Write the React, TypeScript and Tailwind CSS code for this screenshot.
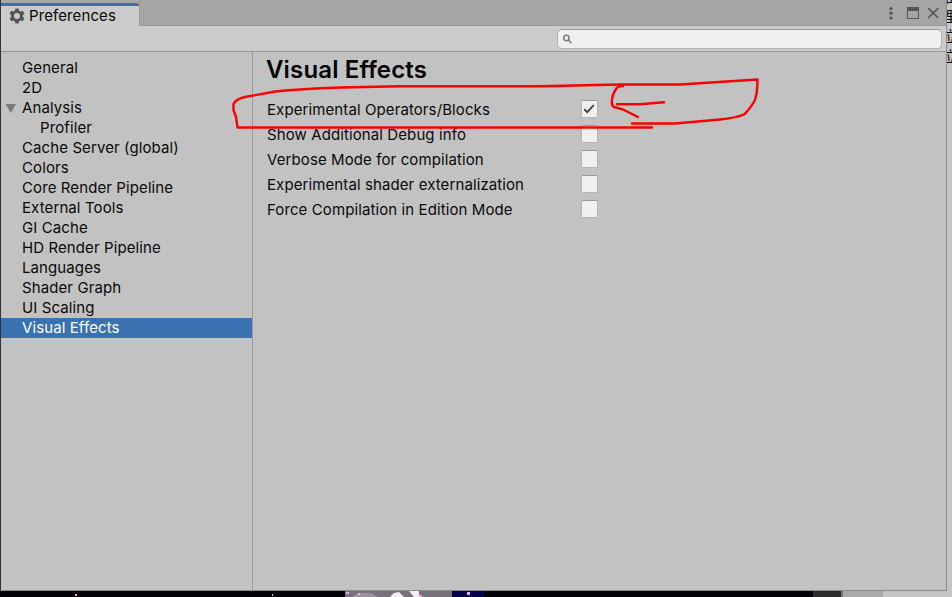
import React from "react";

type Category = { label: string; child?: boolean; open?: boolean; active?: boolean };

const categories: Category[] = [
  { label: "General" },
  { label: "2D" },
  { label: "Analysis", open: true },
  { label: "Profiler", child: true },
  { label: "Cache Server (global)" },
  { label: "Colors" },
  { label: "Core Render Pipeline" },
  { label: "External Tools" },
  { label: "GI Cache" },
  { label: "HD Render Pipeline" },
  { label: "Languages" },
  { label: "Shader Graph" },
  { label: "UI Scaling" },
  { label: "Visual Effects", active: true },
];

const options = [
  { label: "Experimental Operators/Blocks", checked: true },
  { label: "Show Additional Debug info", checked: false },
  { label: "Verbose Mode for compilation", checked: false },
  { label: "Experimental shader externalization", checked: false },
  { label: "Force Compilation in Edition Mode", checked: false },
];

function Gear() {
  return (
    <svg className="h-4 w-4 shrink-0" viewBox="0 0 16 16" fill="none">
      <circle cx="8" cy="8" r="4.4" stroke="#555" strokeWidth="2.8" />
      <g fill="#555">
        {[0, 60, 120, 180, 240, 300].map((a) => (
          <path key={a} d="M6.3 0.4h3.4l.6 3H5.7z" transform={`rotate(${a} 8 8)`} />
        ))}
      </g>
    </svg>
  );
}

function TitleBar() {
  return (
    <div className="flex h-[26px] shrink-0 items-end bg-[#a5a5a5]">
      <div className="flex h-[23px] w-[138px] items-center rounded-tr-[3px] border-t-[3px] border-[#3a72b0] bg-[#cbcbcb] pl-2">
        <Gear />
        <span className="ml-[4px] text-[15px] leading-5 tracking-[0.1px]">Preferences</span>
      </div>
      <div className="flex h-[26px] flex-1 items-center justify-end border-b border-l border-[#999] pr-px">
        <svg className="h-[26px] w-[60px]" viewBox="0 0 60 26" fill="#555">
          <circle cx="6" cy="8.5" r="1.6" />
          <circle cx="6" cy="13.2" r="1.6" />
          <circle cx="6" cy="18" r="1.6" />
          <path d="M22 7h12v12H22zM23 11v7h10v-7z" fillRule="evenodd" />
          <path d="M43.2 8.2l10 9.8M53.2 8.2l-10 9.8" stroke="#555" strokeWidth="1.7" />
        </svg>
      </div>
    </div>
  );
}

function SearchBar() {
  return (
    <div className="flex h-[26px] shrink-0 items-center justify-end border-b border-[#999] bg-[#cbcbcb] pr-[4px]">
      <div className="flex h-5 w-[385px] items-center rounded-[5px] border border-[#b0b0b0] border-t-[#999] bg-[#f0f0f0] pl-[4px]">
        <svg className="h-3 w-3" viewBox="0 0 12 12" fill="none" stroke="#7c7c7c">
          <circle cx="4.4" cy="5" r="2.7" strokeWidth="1.5" />
          <path d="M6.4 7l3 3.2" strokeWidth="1.6" />
        </svg>
      </div>
    </div>
  );
}

function Sidebar() {
  return (
    <nav className="w-[252px] shrink-0 border-r border-[#999] pt-[6px]">
      {categories.map((c) => (
        <div
          key={c.label}
          className={`flex h-5 items-center text-[15px] leading-5 tracking-[0.1px] ${c.child ? "pl-[39px]" : "pl-[4px]"} ${c.active ? "bg-[#3a72b0] text-white" : ""}`}
        >
          {!c.child && (
            <span className="w-[17px] shrink-0">
              {c.open && (
                <svg className="h-[9px] w-[11px]" viewBox="0 0 11 9" fill="#7b7b7b">
                  <path d="M0.5 0h10.5L5.8 9z" />
                </svg>
              )}
            </span>
          )}
          {c.label}
        </div>
      ))}
    </nav>
  );
}

function Checkbox({ checked }: { checked: boolean }) {
  return (
    <span className="mb-px flex h-[18px] w-[17px] items-center justify-center rounded-[2px] border border-[#b4b4b4] border-t-[#999] bg-[#f0f0f0]">
      {checked && (
        <svg className="mr-px h-3 w-3" viewBox="0 0 12 12" fill="none" stroke="#3c3c3c" strokeWidth="1.8">
          <path d="M1.2 6.2l3 3L10.8 2" />
        </svg>
      )}
    </span>
  );
}

function Settings() {
  return (
    <main className="flex-1 pl-[14px]">
      <h1 className="-ml-px h-[45px] pt-[2px] text-[24px] leading-[32px] font-semibold tracking-[0.15px] text-black">Visual Effects</h1>
      {options.map((o) => (
        <label key={o.label} className="flex h-[25px] items-center">
          <span className="w-[314px] text-[15px] leading-5 tracking-[0.1px]">{o.label}</span>
          <Checkbox checked={o.checked} />
        </label>
      ))}
    </main>
  );
}

function Markup() {
  return (
    <svg
      className="pointer-events-none absolute top-0 left-0 h-[597px] w-[952px]"
      viewBox="0 0 952 597"
      fill="none"
      stroke="#fb0000"
      strokeWidth="2.4"
      strokeLinecap="round"
      strokeLinejoin="round"
    >
      <path d="M652 127.5H237.5L236 117L233.5 110V104Q236 99 245 97L275 91.5Q300 89 340 87.5L400 86.3H540L620 84.5H680L715 82.2L757.5 79.5Q757.5 92 755 100Q750 109 744 114.5Q735 118 720 119.5L675 123.5H632" />
      <path d="M623 86Q617 86 615.5 90Q612 95 611.8 102Q611.5 105.5 614 107L623 109.5L638 117M617 104.3H640L664 102.3" />
    </svg>
  );
}

function Backdrop() {
  return (
    <>
      <svg className="absolute bottom-0 left-0 h-[6px] w-[952px]" viewBox="0 0 952 6">
        <rect width="952" height="6" fill="#020206" />
        <rect x="345" width="107" height="6" fill="#77727b" />
        <path d="M390 6l4-4 5-1 5 5zM409 0h10v6h-5z" fill="#f5eff5" />
        <path d="M352 6l6-4h12l8 4z" fill="#9b959d" />
        <path d="M452 0h32v6h-32z" fill="#03034a" />
        <path d="M346 1h3v2h-3zM358 2h2v2h-2zM420 3l3 3h-5zM467 1h3v3h-3zM75 3h2v2h-2zM272 3h1v2h-1z" fill="#f2a5f2" />
        <rect x="813" width="28" height="6" fill="#2c2c2c" />
        <rect x="841" width="2" height="6" fill="#777" />
        <rect x="843" width="40" height="6" fill="#aaa" />
        <rect x="883" width="69" height="6" fill="#c4c4c4" />
      </svg>
      <div className="absolute top-0 left-[947px] h-[70px] w-[5px] overflow-hidden font-['Noto_Sans_CJK_SC',sans-serif] text-[15px] leading-[20px]">
        <div className="-mt-[14px] -ml-[6px] w-4">
          <div>准</div>
          <div>理</div>
          <div>位</div>
          <div>位</div>
        </div>
      </div>
    </>
  );
}

export default function App() {
  return (
    <div className="relative h-[597px] w-[952px] overflow-hidden bg-[#c4c4c4] font-['Inter',sans-serif] text-[#090909]">
      <div className="flex h-[591px] w-[947px] flex-col border-r border-b border-l border-[#8a8a8a] border-l-[#333] bg-[#c2c2c2]">
        <TitleBar />
        <SearchBar />
        <div className="flex flex-1">
          <Sidebar />
          <Settings />
        </div>
      </div>
      <Backdrop />
      <Markup />
    </div>
  );
}
